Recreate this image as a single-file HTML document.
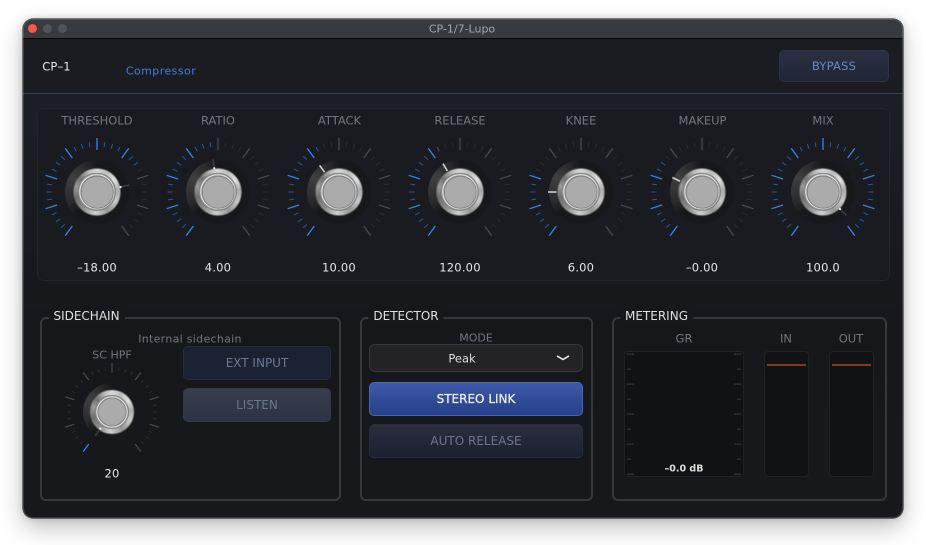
<!DOCTYPE html>
<html><head><meta charset="utf-8"><style>
html,body{margin:0;padding:0;background:#fff;width:926px;height:545px;overflow:hidden}
body{position:relative;font-family:"DejaVu Sans","Liberation Sans",sans-serif}
.win{position:absolute;left:23px;top:19px;width:880px;height:499px;border-radius:10px;background:linear-gradient(#1d2028 0,#1c1e25 20%,#16171b 60%,#17181c 100%);box-shadow:0 0 0 .6px #333,0 9px 24px rgba(0,0,0,.26),0 0 8px rgba(0,0,0,.16);overflow:hidden}
.win:after{content:"";position:absolute;inset:0;border-radius:10px;box-shadow:inset 0 0 0 1px rgba(255,255,255,.14);pointer-events:none}
.bar{position:absolute;left:0;top:0;right:0;height:19px;background:#383b3e;border-bottom:1px solid #060607}
.hdr{position:absolute;left:0;top:20px;right:0;height:54px;background:#1a1c21;border-bottom:1px solid #34415a}
.dot{position:absolute;top:24px;width:9px;height:9px;border-radius:50%;background:#505458}
.t{position:absolute;transform:translate(-50%,-50%);white-space:nowrap;line-height:1;font-size:11px}
.lab{color:#74767d}
.val{color:#e6e6e6;font-size:11.5px;letter-spacing:.2px}
.leg{color:#e0e0e0;font-size:12px;background:#17181c;padding:0 5px}
.panel{position:absolute;left:37px;top:108px;width:851px;height:171px;border-radius:7px;background:#191b20;border:1px solid #22242a}
.grp{position:absolute;top:316.5px;height:184.5px;border:2px solid #36383c;border-radius:6px;box-sizing:border-box}
.btn{position:absolute;box-sizing:border-box;border-radius:5px;display:flex;align-items:center;justify-content:center;font-size:11.5px}
.gm{position:absolute;box-sizing:border-box;background:#111214;border:1px solid #202125;border-radius:4px}
.k{position:absolute;border-radius:50%;transform:translate(-50%,-50%)}
svg.ov{position:absolute;left:0;top:0}
</style></head><body>
<div class="win"><div class="bar"></div><div class="hdr"></div></div>
<div class="dot" style="left:28px;background:#f9564e"></div>
<div class="dot" style="left:43px"></div>
<div class="dot" style="left:58px"></div>
<div class="t" style="left:462px;top:28.5px;color:#a3a6a8;font-size:11px">CP-1/7-Lupo</div>
<div class="t" style="left:56.5px;top:67px;color:#e6e6e6;font-size:11.5px;letter-spacing:.1px">CP–1</div>
<div class="t" style="left:161px;top:71px;color:#3f80de;font-size:11px;letter-spacing:.45px">Compressor</div>
<div class="btn" style="left:779px;top:50px;width:110px;height:32px;background:linear-gradient(#2b2f42,#1f2536);border:1px solid #2d3246;color:#6a8bbd;letter-spacing:.2px">BYPASS</div>
<div class="panel"></div>

<div class="t lab" style="left:97px;top:120.5px;font-size:11.5px">THRESHOLD</div>
<div class="t lab" style="left:218px;top:120.5px;font-size:11.5px">RATIO</div>
<div class="t lab" style="left:339.5px;top:120.5px;font-size:11.5px">ATTACK</div>
<div class="t lab" style="left:460px;top:120.5px;font-size:11.5px">RELEASE</div>
<div class="t lab" style="left:581px;top:120.5px;font-size:11.5px">KNEE</div>
<div class="t lab" style="left:702.5px;top:120.5px;font-size:11.5px">MAKEUP</div>
<div class="t lab" style="left:823px;top:120.5px;font-size:11.5px">MIX</div>

<div class="t val" style="left:97px;top:268px">–18.00</div>
<div class="t val" style="left:218px;top:268px">4.00</div>
<div class="t val" style="left:339px;top:268px">10.00</div>
<div class="t val" style="left:460px;top:268px">120.00</div>
<div class="t val" style="left:581px;top:268px">6.00</div>
<div class="t val" style="left:702px;top:268px">–0.00</div>
<div class="t val" style="left:823px;top:268px">100.0</div>

<div class="grp" style="left:39.5px;width:301px"></div>
<div class="grp" style="left:359.5px;width:233px"></div>
<div class="grp" style="left:611.5px;width:275px"></div>
<div class="t leg" style="left:86.5px;top:316px">SIDECHAIN</div>
<div class="t leg" style="left:406px;top:316px">DETECTOR</div>
<div class="t leg" style="left:656.5px;top:316px">METERING</div>

<div class="t lab" style="left:190px;top:339px;letter-spacing:.3px">Internal sidechain</div>
<div class="t lab" style="left:112px;top:354.5px">SC HPF</div>
<div class="t val" style="left:112px;top:474px">20</div>
<div class="btn" style="left:183px;top:346px;width:148px;height:34px;background:linear-gradient(#1c2130,#1b2233);border:1px solid #262b3a;color:#6d7890;font-size:12px">EXT INPUT</div>
<div class="btn" style="left:183px;top:388px;width:148px;height:34px;background:linear-gradient(#373d4b,#2d3342);border:1px solid #333947;color:#6b7689;font-size:12px">LISTEN</div>

<div class="t lab" style="left:476px;top:338px">MODE</div>
<div class="btn" style="left:369px;top:344px;width:214px;height:28px;background:#232325;border:1px solid #37383a;border-radius:6px"></div>
<div class="t" style="left:462px;top:358.5px;color:#dcdcdc;font-size:11.5px">Peak</div>
<svg class="ov" width="926" height="545" style="pointer-events:none"><path d="M557 356l6 3.5 6-3.5" fill="none" stroke="#e4e4e4" stroke-width="1.6"/></svg>
<div class="btn" style="left:369px;top:382px;width:214px;height:34px;background:linear-gradient(#3c59a8,#264089);border:1px solid #4a66b2;color:#f0f2f8;-webkit-text-stroke:.25px #f0f2f8;font-size:12px">STEREO LINK</div>
<div class="btn" style="left:369px;top:424px;width:214px;height:34px;background:linear-gradient(#2a2e3d,#1b2031);border:1px solid #272b39;color:#6d7690;font-size:12px">AUTO RELEASE</div>

<div class="t lab" style="left:684px;top:339px;font-size:11.5px">GR</div>
<div class="t lab" style="left:786px;top:339px;font-size:11.5px">IN</div>
<div class="t lab" style="left:851px;top:339px;font-size:11.5px">OUT</div>
<div class="gm" style="left:624px;top:351px;width:120px;height:126px"></div>
<div class="gm" style="left:764px;top:351px;width:45px;height:126px"></div>
<div class="gm" style="left:829px;top:351px;width:45px;height:126px"></div>
<div style="position:absolute;left:767px;top:364px;width:39px;height:2px;background:#7f3a20"></div>
<div style="position:absolute;left:832px;top:364px;width:39px;height:2px;background:#7f3a20"></div>
<div class="t" style="left:684px;top:469px;color:#dedede;font-size:9.5px;font-weight:bold">–0.0 dB</div>

<div id="knobs"></div>
<svg id="tk" class="ov" width="926" height="545"></svg>
<script>
var tk=document.getElementById('tk'),kn=document.getElementById('knobs'),s='',h='';
function pol(x,y,r,a){a=a*Math.PI/180;return [(x+r*Math.sin(a)).toFixed(2),(y-r*Math.cos(a)).toFixed(2)];}
function ln(x,y,r1,r2,a,c,w){var p=pol(x,y,r1,a),q=pol(x,y,r2,a);return '<line x1="'+p[0]+'" y1="'+p[1]+'" x2="'+q[0]+'" y2="'+q[1]+'" stroke="'+c+'" stroke-width="'+w+'"/>';}
function knob(x,y,lim,pa,pc,sc){
  var R=sc?{M1:39.5,M2:49,m1:41.5,m2:45,d:29,b:22,w:16.5,c:14.5,p1:20,p2:29}:{M1:42,M2:54,m1:45.5,m2:50.5,d:32,b:23.5,w:18.7,c:16.3,p1:23.5,p2:33};
  for(var a=-144;a<=144;a+=9){
    var maj=(a%36===0),on=a<=lim;
    var c=maj?(on?'#3b82e6':'#46484c'):(on?'#265a9c':'#2a2c30');
    s+=ln(x,y,maj?R.M1:R.m1,maj?R.M2:R.m2,a,c,maj?1.3:1);
  }
  h+='<div class="k" style="left:'+x+'px;top:'+y+'px;width:'+2*R.d+'px;height:'+2*R.d+'px;background:conic-gradient(#17181a 0deg,#17181a 225deg,#2a2a2b 250deg,#3f3f40 300deg,#2a2a2b 335deg,#17181a 360deg)"></div>';
  h+='<div class="k" style="left:'+x+'px;top:'+y+'px;width:'+2*R.b+'px;height:'+2*R.b+'px;filter:blur(.6px);background:conic-gradient(#d8d8d8 0deg,#bcbcbc 25deg,#e0e0e0 55deg,#aaa 85deg,#c8c8c8 115deg,#969696 150deg,#cfcfcf 185deg,#8e8e8e 220deg,#6f6f6f 255deg,#9a9a9a 285deg,#727272 310deg,#c0c0c0 340deg,#d8d8d8 360deg)"></div>';
  h+='<div class="k" style="left:'+x+'px;top:'+y+'px;width:'+2*R.w+'px;height:'+2*R.w+'px;background:#9a9a9a;box-shadow:0 0 0 .6px #777"></div>';
  h+='<div class="k" style="left:'+x+'px;top:'+y+'px;width:'+(2*R.w-2)+'px;height:'+(2*R.w-2)+'px;box-sizing:border-box;border:1.3px solid #ececec;background:#8c8c8c"></div>';
  h+='<div class="k" style="left:'+x+'px;top:'+y+'px;width:'+2*R.c+'px;height:'+2*R.c+'px;box-sizing:border-box;border:1px solid #838383;background:#ababab"></div>';
  if(pc){s+=ln(x,y,R.p1+1,R.p2,pa,'#cfcfcf',1.6);}
  else{s+=ln(x,y,R.p1+1,R.p2,pa,'#3c3c3e',1.6);s+=ln(x,y,R.p1-.5,R.p1+1.5,pa,'#f2f2f2',2);}
}
knob(97,192,54,78,0);
knob(218,192,-9,-9,0);
knob(339,192,-27,-36,1);
knob(460,192,-27,-31,1);
knob(581,192,-72,-90,1);
knob(702,192,-54,-64,1);
knob(823,192,144,135,0);
knob(112,412,-144,-145,0,1);
for(var i=0;i<9;i++){var y=354+i*15,maj=i%2==0;
 s+='<rect x="627" y="'+(y-.5)+'" width="'+(maj?7:4)+'" height="1.3" fill="#303134"/>';
 s+='<rect x="'+(maj?734:737)+'" y="'+(y-.5)+'" width="'+(maj?7:4)+'" height="1.3" fill="#303134"/>';}
kn.innerHTML=h;tk.innerHTML=s;
</script>
</body></html>
